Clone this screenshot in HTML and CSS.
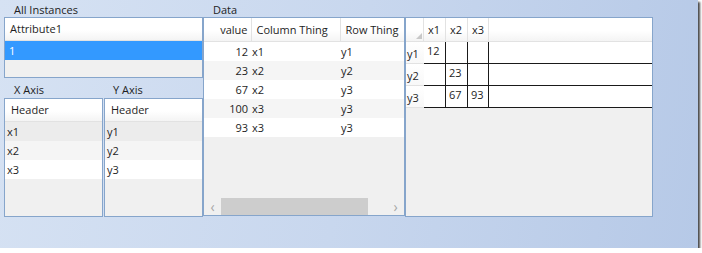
FILE: index.html
```html
<!DOCTYPE html>
<html lang="en">

<head>
  <meta charset="UTF-8">
  <title>Pivot Viewer</title>
  <link rel="stylesheet" href="styles.css">
</head>

<body>
  <div class="window">
    <!-- Coluna da esquerda: instâncias e eixos -->
    <div class="col-left">
      <div class="caption">All Instances</div>
      <div class="listbox instances">
        <div class="lv-header">Attribute1</div>
        <div class="lv-row selected">1</div>
      </div>

      <div class="axis-captions">
        <span class="axis-x">X Axis</span>
        <span class="axis-y">Y Axis</span>
      </div>
      <div class="axis-lists">
        <div class="listbox axis">
          <div class="lv-header">Header</div>
          <div class="lv-row shade1">x1</div>
          <div class="lv-row shade2">x2</div>
          <div class="lv-row white">x3</div>
        </div>
        <div class="listbox axis">
          <div class="lv-header">Header</div>
          <div class="lv-row shade1">y1</div>
          <div class="lv-row shade2">y2</div>
          <div class="lv-row white">y3</div>
        </div>
      </div>
    </div>

    <!-- Tabela de dados -->
    <div class="col-data">
      <div class="caption">Data</div>
      <div class="grid">
        <div class="grid-body">
          <table class="data-table">
            <colgroup>
              <col class="c-value">
              <col class="c-col">
              <col class="c-row">
            </colgroup>
            <thead>
              <tr>
                <th class="num">value</th>
                <th>Column Thing</th>
                <th>Row Thing</th>
              </tr>
            </thead>
            <tbody>
              <tr><td class="num">12</td><td>x1</td><td>y1</td></tr>
              <tr class="alt"><td class="num">23</td><td>x2</td><td>y2</td></tr>
              <tr><td class="num">67</td><td>x2</td><td>y3</td></tr>
              <tr class="alt"><td class="num">100</td><td>x3</td><td>y3</td></tr>
              <tr><td class="num">93</td><td>x3</td><td>y3</td></tr>
            </tbody>
          </table>
        </div>
        <div class="hscroll">
          <span class="arrow">&lsaquo;</span>
          <div class="track"><div class="thumb"></div></div>
          <span class="arrow">&rsaquo;</span>
        </div>
      </div>
    </div>

    <!-- Tabela dinâmica -->
    <div class="col-pivot">
      <div class="pivot">
        <table class="pivot-table">
          <colgroup>
            <col class="p-head">
            <col class="p-x1">
            <col class="p-x2">
            <col class="p-x3">
            <col>
          </colgroup>
          <thead>
            <tr>
              <th class="corner">
                <svg width="6" height="6" viewBox="0 0 6 6"><polygon points="6,0 6,6 0,6" fill="#c8c8c8"/></svg>
              </th>
              <th>x1</th>
              <th>x2</th>
              <th>x3</th>
              <th class="filler"></th>
            </tr>
          </thead>
          <tbody>
            <tr><th>y1</th><td>12</td><td></td><td></td><td class="last"></td></tr>
            <tr><th>y2</th><td></td><td>23</td><td></td><td class="last"></td></tr>
            <tr><th>y3</th><td></td><td>67</td><td>93</td><td class="last"></td></tr>
          </tbody>
        </table>
      </div>
    </div>
  </div>
</body>

</html>
```

FILE: styles.css
```css
/* Estilos gerais */
body {
  margin: 0;
  background: #fff;
  font-family: "Open Sans", "Noto Sans", sans-serif;
  font-size: 11px;
  color: #1e1e1e;
}

.window {
  width: 698px;
  height: 248px;
  box-sizing: border-box;
  padding: 3px 0 0 4px;
  display: flex;
  background: linear-gradient(100deg, #d6e2f3 0%, #c8d7ee 50%, #b6c9e7 100%);
  box-shadow: 2px 2px 2px rgba(40, 40, 40, 0.85);
}

.caption {
  height: 14px;
  line-height: 14px;
  padding-left: 10px;
}

/* Listas da esquerda */
.col-left {
  width: 199px;
  display: flex;
  flex-direction: column;
}

.listbox {
  box-sizing: border-box;
  border: 1px solid #86a5cb;
  background: #f0f0f0;
  overflow: hidden;
}

.instances {
  height: 61px;
}

.axis-captions {
  height: 20px;
  display: flex;
  align-items: flex-end;
  line-height: 17px;
}

.axis-x {
  width: 100px;
  padding-left: 10px;
  box-sizing: border-box;
}

.axis-y {
  padding-left: 9px;
}

.axis-lists {
  display: flex;
  gap: 1px;
  height: 119px;
}

.axis {
  width: 99px;
}

.lv-header {
  height: 23px;
  line-height: 22px;
  box-sizing: border-box;
  padding-left: 5px;
  background: linear-gradient(#ffffff, #ffffff 55%, #f4f4f4);
  border-bottom: 1px solid #e2e2e2;
}

.axis .lv-header {
  padding-left: 6px;
}

.lv-row {
  height: 19px;
  line-height: 19px;
  padding-left: 2px;
}

.instances .lv-row {
  padding-left: 4px;
}

.selected {
  background: #3399ff;
  color: #fff;
}

.shade1 {
  background: #ececec;
}

.shade2 {
  background: #f5f5f5;
}

.white {
  background: #fff;
}

/* Tabela de dados */
.col-data {
  width: 202px;
  display: flex;
  flex-direction: column;
}

.grid {
  height: 199px;
  box-sizing: border-box;
  border: 1px solid #86a5cb;
  background: #f0f0f0;
  display: flex;
  flex-direction: column;
}

.grid-body {
  flex: 1;
  overflow: hidden;
}

.data-table {
  table-layout: fixed;
  border-collapse: collapse;
  width: 240px;
}

.c-value {
  width: 47px;
}

.c-col {
  width: 89px;
}

.c-row {
  width: 104px;
}

.data-table th {
  height: 23px;
  padding: 0 0 0 5px;
  font-weight: normal;
  text-align: left;
  background: linear-gradient(#ffffff, #ffffff 55%, #f4f4f4);
  border-right: 1px solid #e2e2e2;
  border-bottom: 1px solid #e2e2e2;
  white-space: nowrap;
}

.data-table td {
  height: 19px;
  padding: 0 0 0 1px;
  background: #fff;
  white-space: nowrap;
}

.data-table .alt td {
  background: #f5f5f5;
}

.data-table .num {
  text-align: right;
  padding: 0 3px 0 0;
}

.hscroll {
  height: 17px;
  display: flex;
  align-items: center;
  background: #f0f0f0;
}

.arrow {
  width: 17px;
  text-align: center;
  color: #a6a6a6;
  font-size: 14px;
  line-height: 17px;
}

.track {
  flex: 1;
  height: 17px;
}

.thumb {
  width: 147px;
  height: 17px;
  background: #cdcdcd;
}

/* Tabela dinâmica */
.col-pivot {
  width: 248px;
  padding-top: 14px;
}

.pivot {
  height: 200px;
  box-sizing: border-box;
  border: 1px solid #86a5cb;
  background: #f0f0f0;
  overflow: hidden;
}

.pivot-table {
  width: 100%;
  table-layout: fixed;
  border-collapse: separate;
  border-spacing: 0;
}

.p-head {
  width: 18px;
}

.p-x1,
.p-x2 {
  width: 22px;
}

.p-x3 {
  width: 21px;
}

.pivot-table thead tr {
  height: 24px;
}

.pivot-table thead th {
  padding: 0 0 0 4px;
  font-weight: normal;
  text-align: left;
  line-height: 14px;
  background: linear-gradient(#ffffff, #ffffff 55%, #f4f4f4);
  border-right: 1px solid #e2e2e2;
  border-bottom: 1px solid #e2e2e2;
}

.pivot-table thead .filler {
  border-right: none;
}

.pivot-table .corner {
  padding: 0 1px 2px 0;
  text-align: right;
  vertical-align: bottom;
  line-height: 0;
}

.pivot-table tbody tr {
  height: 22px;
}

.pivot-table tbody th {
  padding: 3px 0 0 1px;
  font-weight: normal;
  text-align: left;
  line-height: 14px;
  background: linear-gradient(#ffffff, #f8f8f8);
  border-bottom: 1px solid #e2e2e2;
}

.pivot-table td {
  padding: 2px 0 0 3px;
  line-height: 14px;
  vertical-align: top;
  background: #fff;
  border-right: 1px solid #1a1a1a;
  border-bottom: 1px solid #1a1a1a;
}

.pivot-table td.last {
  border-right: none;
}
```
